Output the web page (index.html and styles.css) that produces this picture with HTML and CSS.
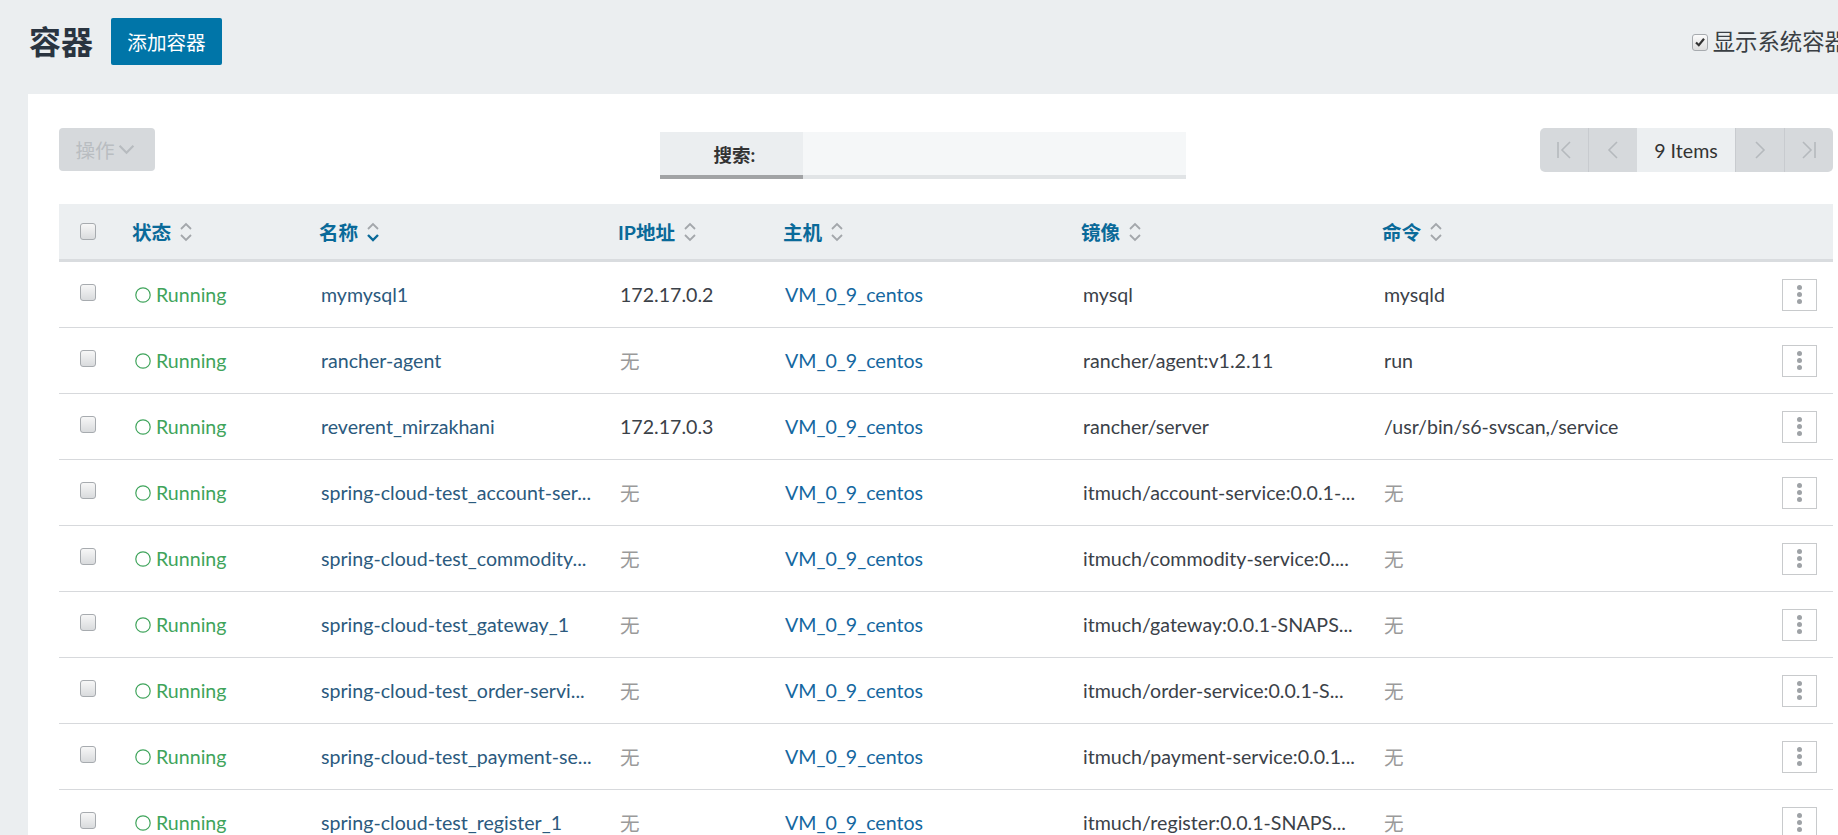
FILE: index.html
```html
<!DOCTYPE html>
<html lang="zh">
<head>
<meta charset="utf-8">
<title>容器</title>
<link rel="stylesheet" href="styles.css">
</head>
<body>
<header class="top">
  <h1 class="title">容器</h1>
  <button class="btn-primary">添加容器</button>
  <label class="sys-toggle"><span class="cb cb-checked"><svg viewBox="0 0 12 12" width="12" height="12"><path d="M2 6.5 L4.8 9.2 L10 2.8" fill="none" stroke="#333" stroke-width="2.2"/></svg></span>显示系统容器</label>
</header>
<main class="card">
  <div class="toolbar">
    <button class="btn-action">操作<svg viewBox="0 0 16 10" width="17" height="11"><polyline points="1.5,1.5 8,8 14.5,1.5" fill="none" stroke="#b7bbbf" stroke-width="2"/></svg></button>
    <div class="search"><span class="search-label">搜索:</span><span class="search-input"></span></div>
    <div class="pager">
      <span class="pg-btn"><svg viewBox="0 0 18 20" width="18" height="20"><line x1="3" y1="2" x2="3" y2="18" stroke="#b5b9bd" stroke-width="1.6"/><polyline points="15,2 7,10 15,18" fill="none" stroke="#b5b9bd" stroke-width="1.6"/></svg></span>
      <span class="pg-btn"><svg viewBox="0 0 12 20" width="12" height="20"><polyline points="10,2 2,10 10,18" fill="none" stroke="#b5b9bd" stroke-width="1.6"/></svg></span>
      <span class="pg-count">9 Items</span>
      <span class="pg-btn"><svg viewBox="0 0 12 20" width="12" height="20"><polyline points="2,2 10,10 2,18" fill="none" stroke="#b5b9bd" stroke-width="1.6"/></svg></span>
      <span class="pg-btn"><svg viewBox="0 0 18 20" width="18" height="20"><polyline points="3,2 11,10 3,18" fill="none" stroke="#b5b9bd" stroke-width="1.6"/><line x1="15" y1="2" x2="15" y2="18" stroke="#b5b9bd" stroke-width="1.6"/></svg></span>
    </div>
  </div>

  <div class="table">
    <div class="grid thead">
      <div class="c-cb"><span class="cb"></span></div>
      <div class="th">状态<svg class="sort" viewBox="0 0 14 20" width="14" height="20"><polyline points="2,7 7,2 12,7" fill="none" stroke="#a3a7ab" stroke-width="1.8"/><polyline points="2,13 7,18 12,13" fill="none" stroke="#a3a7ab" stroke-width="1.8"/></svg></div>
      <div class="th">名称<svg class="sort" viewBox="0 0 14 20" width="14" height="20"><polyline points="2,7 7,2 12,7" fill="none" stroke="#a3a7ab" stroke-width="1.8"/><polyline points="2,13 7,18 12,13" fill="none" stroke="#0a6a99" stroke-width="2.4"/></svg></div>
      <div class="th">IP地址<svg class="sort" viewBox="0 0 14 20" width="14" height="20"><polyline points="2,7 7,2 12,7" fill="none" stroke="#a3a7ab" stroke-width="1.8"/><polyline points="2,13 7,18 12,13" fill="none" stroke="#a3a7ab" stroke-width="1.8"/></svg></div>
      <div class="th">主机<svg class="sort" viewBox="0 0 14 20" width="14" height="20"><polyline points="2,7 7,2 12,7" fill="none" stroke="#a3a7ab" stroke-width="1.8"/><polyline points="2,13 7,18 12,13" fill="none" stroke="#a3a7ab" stroke-width="1.8"/></svg></div>
      <div class="th">镜像<svg class="sort" viewBox="0 0 14 20" width="14" height="20"><polyline points="2,7 7,2 12,7" fill="none" stroke="#a3a7ab" stroke-width="1.8"/><polyline points="2,13 7,18 12,13" fill="none" stroke="#a3a7ab" stroke-width="1.8"/></svg></div>
      <div class="th">命令<svg class="sort" viewBox="0 0 14 20" width="14" height="20"><polyline points="2,7 7,2 12,7" fill="none" stroke="#a3a7ab" stroke-width="1.8"/><polyline points="2,13 7,18 12,13" fill="none" stroke="#a3a7ab" stroke-width="1.8"/></svg></div>
      <div></div>
    </div>

    <div class="grid trow">
      <div class="c-cb"><span class="cb"></span></div>
      <div class="td state"><svg viewBox="0 0 16 16" width="16" height="16"><circle cx="8" cy="8" r="7.2" fill="none" stroke="#3fa45b" stroke-width="1.2"/></svg>Running</div>
      <div class="td name">mymysql1</div>
      <div class="td">172.17.0.2</div>
      <div class="td host">VM_0_9_centos</div>
      <div class="td">mysql</div>
      <div class="td">mysqld</div>
      <div class="td-act"><span class="kebab"><i></i><i></i><i></i></span></div>
    </div>

    <div class="grid trow">
      <div class="c-cb"><span class="cb"></span></div>
      <div class="td state"><svg viewBox="0 0 16 16" width="16" height="16"><circle cx="8" cy="8" r="7.2" fill="none" stroke="#3fa45b" stroke-width="1.2"/></svg>Running</div>
      <div class="td name">rancher-agent</div>
      <div class="td muted">无</div>
      <div class="td host">VM_0_9_centos</div>
      <div class="td">rancher/agent:v1.2.11</div>
      <div class="td">run</div>
      <div class="td-act"><span class="kebab"><i></i><i></i><i></i></span></div>
    </div>

    <div class="grid trow">
      <div class="c-cb"><span class="cb"></span></div>
      <div class="td state"><svg viewBox="0 0 16 16" width="16" height="16"><circle cx="8" cy="8" r="7.2" fill="none" stroke="#3fa45b" stroke-width="1.2"/></svg>Running</div>
      <div class="td name">reverent_mirzakhani</div>
      <div class="td">172.17.0.3</div>
      <div class="td host">VM_0_9_centos</div>
      <div class="td">rancher/server</div>
      <div class="td">/usr/bin/s6-svscan,/service</div>
      <div class="td-act"><span class="kebab"><i></i><i></i><i></i></span></div>
    </div>

    <div class="grid trow">
      <div class="c-cb"><span class="cb"></span></div>
      <div class="td state"><svg viewBox="0 0 16 16" width="16" height="16"><circle cx="8" cy="8" r="7.2" fill="none" stroke="#3fa45b" stroke-width="1.2"/></svg>Running</div>
      <div class="td name">spring-cloud-test_account-ser...</div>
      <div class="td muted">无</div>
      <div class="td host">VM_0_9_centos</div>
      <div class="td">itmuch/account-service:0.0.1-...</div>
      <div class="td muted">无</div>
      <div class="td-act"><span class="kebab"><i></i><i></i><i></i></span></div>
    </div>

    <div class="grid trow">
      <div class="c-cb"><span class="cb"></span></div>
      <div class="td state"><svg viewBox="0 0 16 16" width="16" height="16"><circle cx="8" cy="8" r="7.2" fill="none" stroke="#3fa45b" stroke-width="1.2"/></svg>Running</div>
      <div class="td name">spring-cloud-test_commodity...</div>
      <div class="td muted">无</div>
      <div class="td host">VM_0_9_centos</div>
      <div class="td">itmuch/commodity-service:0....</div>
      <div class="td muted">无</div>
      <div class="td-act"><span class="kebab"><i></i><i></i><i></i></span></div>
    </div>

    <div class="grid trow">
      <div class="c-cb"><span class="cb"></span></div>
      <div class="td state"><svg viewBox="0 0 16 16" width="16" height="16"><circle cx="8" cy="8" r="7.2" fill="none" stroke="#3fa45b" stroke-width="1.2"/></svg>Running</div>
      <div class="td name">spring-cloud-test_gateway_1</div>
      <div class="td muted">无</div>
      <div class="td host">VM_0_9_centos</div>
      <div class="td">itmuch/gateway:0.0.1-SNAPS...</div>
      <div class="td muted">无</div>
      <div class="td-act"><span class="kebab"><i></i><i></i><i></i></span></div>
    </div>

    <div class="grid trow">
      <div class="c-cb"><span class="cb"></span></div>
      <div class="td state"><svg viewBox="0 0 16 16" width="16" height="16"><circle cx="8" cy="8" r="7.2" fill="none" stroke="#3fa45b" stroke-width="1.2"/></svg>Running</div>
      <div class="td name">spring-cloud-test_order-servi...</div>
      <div class="td muted">无</div>
      <div class="td host">VM_0_9_centos</div>
      <div class="td">itmuch/order-service:0.0.1-S...</div>
      <div class="td muted">无</div>
      <div class="td-act"><span class="kebab"><i></i><i></i><i></i></span></div>
    </div>

    <div class="grid trow">
      <div class="c-cb"><span class="cb"></span></div>
      <div class="td state"><svg viewBox="0 0 16 16" width="16" height="16"><circle cx="8" cy="8" r="7.2" fill="none" stroke="#3fa45b" stroke-width="1.2"/></svg>Running</div>
      <div class="td name">spring-cloud-test_payment-se...</div>
      <div class="td muted">无</div>
      <div class="td host">VM_0_9_centos</div>
      <div class="td">itmuch/payment-service:0.0.1...</div>
      <div class="td muted">无</div>
      <div class="td-act"><span class="kebab"><i></i><i></i><i></i></span></div>
    </div>

    <div class="grid trow">
      <div class="c-cb"><span class="cb"></span></div>
      <div class="td state"><svg viewBox="0 0 16 16" width="16" height="16"><circle cx="8" cy="8" r="7.2" fill="none" stroke="#3fa45b" stroke-width="1.2"/></svg>Running</div>
      <div class="td name">spring-cloud-test_register_1</div>
      <div class="td muted">无</div>
      <div class="td host">VM_0_9_centos</div>
      <div class="td">itmuch/register:0.0.1-SNAPS...</div>
      <div class="td muted">无</div>
      <div class="td-act"><span class="kebab"><i></i><i></i><i></i></span></div>
    </div>
  </div>
</main>
</body>
</html>
```

FILE: styles.css
```css
* { box-sizing: border-box; }
html, body { margin: 0; padding: 0; overflow: hidden; }
body {
  width: 1838px;
  height: 835px;
  background: #ebeef0;
  font-family: Lato, "Noto Sans CJK SC", sans-serif;
  font-size: 19.6px;
  color: #333;
}

/* top bar */
.top {
  height: 94px;
  display: flex;
  align-items: flex-start;
  padding-left: 29px;
  overflow: hidden;
}
.title {
  margin: 22px 0 0;
  font-size: 32px;
  line-height: 40px;
  font-weight: 700;
  color: #2a3440;
}
.btn-primary {
  margin: 18px 0 0 18px;
  width: 111px;
  height: 47px;
  padding: 0;
  border: 0;
  border-radius: 2px;
  background: #0075a8;
  color: #fff;
  font-family: inherit;
  font-size: 19.6px;
}
.sys-toggle {
  margin: 28px -9px 0 auto;
  display: flex;
  align-items: center;
  gap: 5px;
  white-space: nowrap;
  font-size: 22.4px;
  line-height: 28px;
  color: #3a3f44;
}

/* checkboxes */
.cb {
  flex: none;
  display: inline-flex;
  align-items: center;
  justify-content: center;
  width: 16px;
  height: 17px;
  border: 1px solid #a7abaf;
  border-radius: 3px;
  background: linear-gradient(#f7f7f7, #d9dbdd);
}
.cb-checked { background: linear-gradient(#fbfbfb, #dedede); }

/* card */
.card {
  margin-left: 28px;
  background: #fff;
  height: 741px;
  padding: 34px 5px 0 31px;
}
.toolbar {
  display: flex;
  align-items: flex-start;
  height: 44px;
}
.btn-action {
  width: 96px;
  height: 43px;
  display: flex;
  align-items: center;
  justify-content: center;
  gap: 3px;
  padding: 0 4px 0 0;
  border: 0;
  border-radius: 4px;
  background: #d6d9dc;
  color: #b9bdc1;
  font-family: inherit;
  font-size: 19.6px;
}
.search {
  margin: 4px 0 0 505px;
  display: flex;
  height: 47px;
}
.search-label {
  width: 143px;
  display: flex;
  align-items: center;
  justify-content: center;
  padding-left: 6px;
  background: #ebeef0;
  border-bottom: 4px solid #a1a3a5;
  font-weight: 700;
  font-size: 18.5px;
  color: #333;
}
.search-input {
  width: 383px;
  background: #f5f7f8;
  border-bottom: 4px solid #e1e4e6;
}
.pager {
  margin-left: auto;
  display: flex;
  height: 44px;
  border-radius: 5px;
  overflow: hidden;
  background: #d6d9dc;
}
.pg-btn {
  width: 49px;
  display: flex;
  align-items: center;
  justify-content: center;
  border-left: 1px solid #c8cbcf;
}
.pg-btn:first-child { border-left: 0; width: 48px; }
.pg-count {
  width: 98px;
  display: flex;
  align-items: center;
  justify-content: center;
  background: #eceff1;
  color: #333;
  font-size: 19.6px;
}

/* table */
.table { margin-top: 32px; }
.grid {
  display: grid;
  grid-template-columns: 71px 187px 299px 165px 298px 301px 1fr 67px;
  align-items: center;
}
.thead {
  height: 58px;
  background: #eceff1;
  border-bottom: 3px solid #d9dcdf;
}
.th {
  display: flex;
  align-items: center;
  gap: 8px;
  padding-left: 2px;
  font-weight: 700;
  color: #0a6a99;
}
.sort { flex: none; }
.c-cb { padding-left: 21px; display: flex; align-items: center; }
.trow .c-cb { margin-top: -4px; }
.trow {
  height: 66px;
  border-bottom: 1px solid #d7d9dc;
}
.td {
  padding-left: 4px;
  white-space: nowrap;
  overflow: hidden;
  color: #3b4148;
}
.state {
  display: flex;
  align-items: center;
  gap: 5px;
  padding-left: 5px;
  color: #3fa45b;
}
.name { color: #2b5a7e; }
.host { color: #1467a0; }
.muted { color: #9a9a9a; }
.td-act { display: flex; justify-content: flex-end; padding-right: 16px; }
.kebab {
  width: 35px;
  height: 32px;
  border: 1px solid #c8cacc;
  background: #fff;
  display: flex;
  flex-direction: column;
  align-items: center;
  justify-content: center;
  gap: 2px;
}
.kebab i {
  width: 5px;
  height: 5px;
  border-radius: 50%;
  background: #9ea2a6;
}
```
